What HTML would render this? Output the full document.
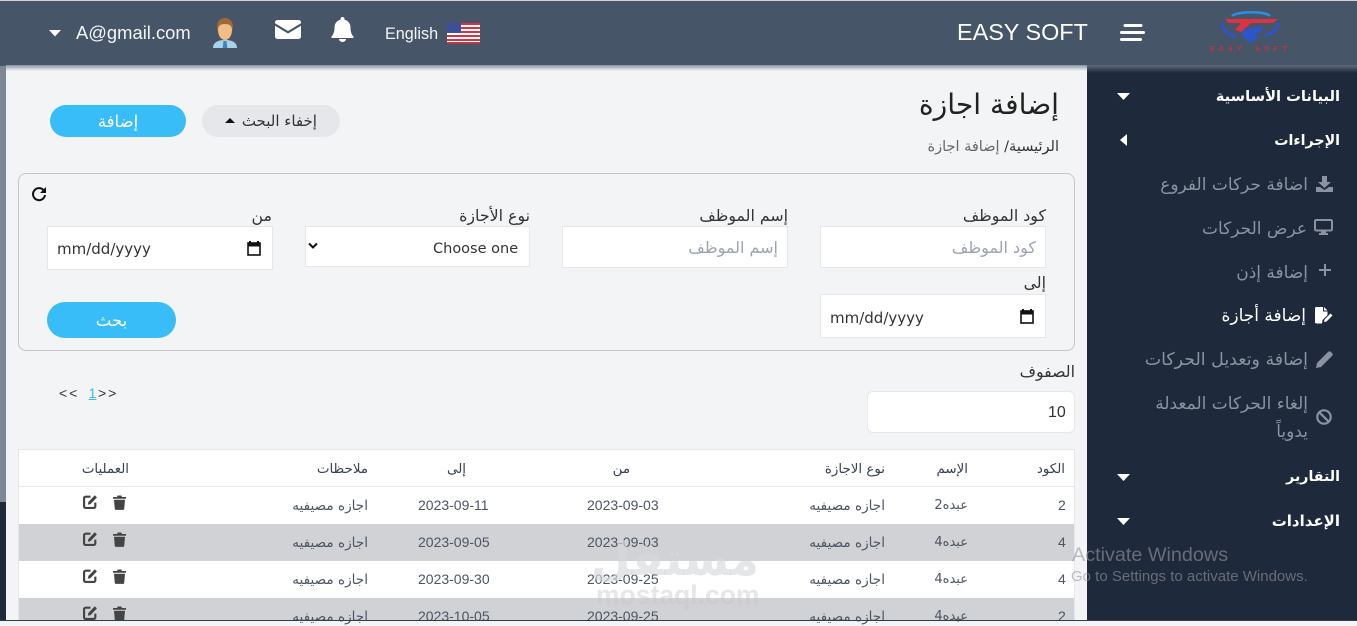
<!DOCTYPE html>
<html lang="ar">
<head>
<meta charset="utf-8">
<title>EASY SOFT</title>
<style>
*{box-sizing:border-box}
html,body{margin:0;padding:0;width:1357px;height:621px;overflow:hidden;background:#f3f4f6;font-family:"Liberation Sans","DejaVu Sans",sans-serif;color:#374151}
.a{position:absolute;white-space:nowrap}
.r{position:absolute;white-space:nowrap;direction:rtl;text-align:right;font-family:"DejaVu Sans",sans-serif}
.box{position:absolute;background:#fff;border:1px solid #e5e7eb}
.pill{position:absolute;border-radius:17px;text-align:center;direction:rtl;font-family:"DejaVu Sans",sans-serif}
.side{color:#fff;font-weight:bold;font-size:14.2px;line-height:22px}
.sub{color:#8b93a1;font-size:17px;line-height:22px}
.lbl{font-size:15.8px;line-height:20px;color:#333}
.ph{font-size:16px;line-height:20px;color:#9ca3af}
.date{font-family:"DejaVu Sans",sans-serif;font-size:15px;line-height:20px;color:#333}
.th{font-size:13.4px;line-height:18px;color:#374151}
.td{font-size:13.6px;line-height:18px;color:#4b5563}
.n{font-size:14px;line-height:18px;color:#4b5563}
.row{position:absolute;left:19px;width:1055px;height:37px;background:#fff}
.g{background:#d1d2d5}
svg{position:absolute;display:block}
</style>
</head>
<body>
<!-- page background pieces -->
<div class="a" style="left:0;top:66px;width:6px;height:436px;background:#7f8694"></div>
<div class="a" style="left:0;top:502px;width:6px;height:119px;background:#1e293b"></div>
<div class="a" style="left:1087px;top:66px;width:270px;height:555px;background:#1e293b"></div>

<!-- header -->
<div class="a" style="left:0;top:0;width:1357px;height:66px;background:#475569;border-top:1px solid #d4d4d4"></div>
<div class="a" style="left:6px;top:65px;width:1081px;height:6px;background:linear-gradient(#8a93a3,#f3f4f6)"></div>
<div class="a" style="left:1087px;top:65px;width:270px;height:8px;background:linear-gradient(#5f6b7d,#1e293b)"></div>

<svg style="left:49px;top:30px" width="12" height="7" viewBox="0 0 12 7"><path d="M0 0H12L6 6.500Z" fill="#fff"/></svg>
<div class="a" style="left:76px;top:22px;font-size:18.400px;line-height:22px;color:#f3f4f6">A@gmail.com</div>
<svg style="left:212px;top:18px" width="26" height="31" viewBox="0 0 26 31">
<path d="M1 30c0-5 4-8 12-8s12 3 12 8Z" fill="#a9d3ea"/>
<path d="M11.500 23h3l.8 7h-4.600Z" fill="#3f86b8"/>
<ellipse cx="13" cy="12" rx="7" ry="10" fill="#f2bd85"/>
<path d="M5.500 13C3.500 3 9 0 13 0s9.500 3 7.500 13C20 8 18 6 13 6S6 8 5.500 13Z" fill="#a06a36"/>
</svg>
<svg style="left:275px;top:20px" width="26" height="19" viewBox="0 0 26 19"><path d="M2.500 0h21A2.500 2.500 0 0 1 26 2.500v.7L13 11 0 3.200V2.500A2.500 2.500 0 0 1 2.500 0Z" fill="#fff"/><path d="M0 5.800l13 7.700 13-7.700V16.500a2.500 2.500 0 0 1-2.500 2.500h-21A2.500 2.500 0 0 1 0 16.500Z" fill="#fff"/></svg>
<svg style="left:331px;top:17px" width="23" height="25" viewBox="0 0 23 25"><path d="M11.500 0a2 2 0 0 1 2 2v.8c3.800.8 6 4 6 7.700 0 5 1.300 7 3 9 .4.500.1 1.500-.8 1.500H1.300c-.9 0-1.200-1-.8-1.500 1.700-2 3-4 3-9 0-3.700 2.200-6.900 6-7.700V2a2 2 0 0 1 2-2Z" fill="#fff"/><path d="M8 22h7a3.500 3 0 0 1-7 0Z" fill="#fff"/></svg>
<div class="a" style="left:385px;top:24px;font-size:16.200px;line-height:20px;color:#f3f4f6">English</div>
<svg style="left:447px;top:23px" width="33" height="21" viewBox="0 0 33 21">
<rect width="33" height="20" fill="#fff"/>
<g fill="#d8333f"><rect width="33" height="2"/><rect y="4" width="33" height="2"/><rect y="8" width="33" height="2"/><rect y="12" width="33" height="2"/><rect y="16" width="33" height="2"/><rect y="19" width="33" height="1.500"/></g>
<rect width="14" height="10" fill="#3b4f9a"/>
</svg>
<div class="a" style="left:957px;top:17px;font-size:23.400px;line-height:30px;color:#fff">EASY SOFT</div>
<svg style="left:1120px;top:23px" width="25" height="20" viewBox="0 0 25 20"><g stroke="#fff" stroke-width="3" stroke-linecap="round"><path d="M5 2.500h16M1.500 9.500h22M1.500 16.500h19"/></g></svg>
<svg style="left:1205px;top:8px" width="95" height="50" viewBox="0 0 95 50">
<path d="M27 8C33 3 60 3 65 8" stroke="#2a8fe0" stroke-width="2.400" fill="none"/>
<path d="M17 15C17 22 24 27 31 29M73 15C73 22 66 26 60 28" stroke="#2c55c9" stroke-width="3" fill="none"/>
<path d="M37 22L58 18 56 24 49 28 55 29 45 35 37 28Z" fill="#2c55c9"/>
<path d="M20 11H73L68 15H46L36 24 30 22 36 15H24Z" fill="#dc3242"/>
<text x="5" y="43" font-size="7.500" font-weight="bold" fill="#c9303f" textLength="77" font-family="Liberation Mono">EASY SOFT</text>
</svg>

<!-- page title -->
<div class="r" style="right:298px;top:85px;font-size:28.200px;line-height:40px;color:#222">إضافة اجازة</div>
<div class="r" style="right:298px;top:137px;font-size:14.500px;line-height:20px;color:#666"><span style="color:#333">الرئيسية/</span> إضافة اجازة</div>

<div class="pill" style="left:202px;top:105px;width:138px;height:32px;background:#e5e7eb;font-size:15px;line-height:33px;color:#333">إخفاء البحث <span style="display:inline-block;width:0;height:0;border:5px solid transparent;border-top:0;border-bottom:5px solid #111;vertical-align:3px;margin-right:2px"></span></div>
<div class="pill" style="left:50px;top:105px;width:136px;height:32px;background:#38bdf8;color:#fff;font-size:16.500px;line-height:33px">إضافة</div>

<!-- search panel -->
<div class="a" style="left:18px;top:173px;width:1057px;height:178px;border:1px solid #c4c6ca;border-radius:8px"></div>
<svg style="left:31px;top:186px" width="16" height="16" viewBox="0 0 16 16"><path d="M12.800 4.500A6 6 0 1 0 14 9" fill="none" stroke="#111" stroke-width="2"/><path d="M15 1v6H9Z" fill="#111"/></svg>

<div class="r lbl" style="right:311px;top:206px">كود الموظف</div>
<div class="box" style="left:820px;top:226px;width:226px;height:42px"></div>
<div class="r ph" style="right:321px;top:238px">كود الموظف</div>

<div class="r lbl" style="right:569px;top:206px">إسم الموظف</div>
<div class="box" style="left:562px;top:226px;width:226px;height:42px"></div>
<div class="r ph" style="right:579px;top:238px">إسم الموظف</div>

<div class="r lbl" style="right:827px;top:206px">نوع الأجازة</div>
<div class="box" style="left:305px;top:226px;width:225px;height:41px"></div>
<svg style="left:308px;top:242px" width="10" height="8" viewBox="0 0 10 8"><path d="M1 1.500l4 4 4-4" fill="none" stroke="#111" stroke-width="2"/></svg>
<div class="a" style="left:433px;top:239px;font-size:14.500px;line-height:20px;color:#333;font-family:'DejaVu Sans',sans-serif">Choose one</div>

<div class="r lbl" style="right:1085px;top:206px">من</div>
<div class="box" style="left:47px;top:226px;width:226px;height:44px"></div>
<div class="a date" style="left:57px;top:239px">mm/dd/yyyy</div>
<svg style="left:247px;top:241px" width="14" height="15" viewBox="0 0 14 15"><path d="M3 0v2M11 0v2" stroke="#111" stroke-width="2"/><rect x="1" y="2" width="12" height="12" fill="none" stroke="#111" stroke-width="1.600"/><rect x="1" y="2" width="12" height="3.500" fill="#111"/></svg>

<div class="r lbl" style="right:311px;top:273px">إلى</div>
<div class="box" style="left:820px;top:294px;width:226px;height:44px"></div>
<div class="a date" style="left:830px;top:308px">mm/dd/yyyy</div>
<svg style="left:1020px;top:309px" width="14" height="15" viewBox="0 0 14 15"><path d="M3 0v2M11 0v2" stroke="#111" stroke-width="2"/><rect x="1" y="2" width="12" height="12" fill="none" stroke="#111" stroke-width="1.600"/><rect x="1" y="2" width="12" height="3.500" fill="#111"/></svg>

<div class="pill" style="left:47px;top:302px;width:129px;height:36px;background:#38bdf8;border-radius:18px;color:#fff;font-size:16.500px;line-height:38px">بحث</div>

<!-- rows control -->
<div class="r lbl" style="right:282px;top:362px">الصفوف</div>
<div class="box" style="left:867px;top:391px;width:208px;height:42px;border-radius:6px"></div>
<div class="a" style="left:1048px;top:403px;font-size:16px;line-height:20px;color:#333">10</div>

<div class="a" style="left:59px;top:384px;font-size:14px;line-height:18px;color:#333;letter-spacing:2px">&lt;&lt;</div>
<div class="a" style="left:88px;top:384px;width:9px;text-align:center;font-size:14px;line-height:18px;color:#38bdf8;text-decoration:underline">1</div>
<div class="a" style="left:98px;top:384px;font-size:14px;line-height:18px;color:#333;letter-spacing:2px">&gt;&gt;</div>

<!-- table -->
<div class="a" style="left:18px;top:449px;width:1057px;height:172px;border:1px solid #e5e7eb;border-bottom:0;background:#fff"></div>
<div class="a" style="left:19px;top:486px;width:1055px;height:1px;background:#e5e7eb"></div>
<div class="row g" style="top:524px"></div>
<div class="row g" style="top:598px;height:23px"></div>

<div class="r th" style="right:292px;top:461px">الكود</div>
<div class="r th" style="right:389px;top:461px">الإسم</div>
<div class="r th" style="right:472px;top:461px">نوع الاجازة</div>
<div class="r th" style="right:727px;top:461px">من</div>
<div class="r th" style="right:891px;top:461px">إلى</div>
<div class="r th" style="right:989px;top:461px">ملاحظات</div>
<div class="r th" style="right:1228px;top:461px">العمليات</div>

<!-- rows -->
<div class="a n" style="left:1058px;top:496px">2</div>
<div class="r td" style="right:389px;top:497px;font-size:13px">عبده2</div>
<div class="r td" style="right:472px;top:497px">اجازه مصيفيه</div>
<div class="a n" style="left:587px;top:496px">2023-09-03</div>
<div class="a n" style="left:418px;top:496px">2023-09-11</div>
<div class="r td" style="right:989px;top:497px">اجازه مصيفيه</div>

<div class="a n" style="left:1058px;top:533px">4</div>
<div class="r td" style="right:389px;top:534px;font-size:13px">عبده4</div>
<div class="r td" style="right:472px;top:534px">اجازه مصيفيه</div>
<div class="a n" style="left:587px;top:533px">2023-09-03</div>
<div class="a n" style="left:418px;top:533px">2023-09-05</div>
<div class="r td" style="right:989px;top:534px">اجازه مصيفيه</div>

<div class="a n" style="left:1058px;top:570px">4</div>
<div class="r td" style="right:389px;top:571px;font-size:13px">عبده4</div>
<div class="r td" style="right:472px;top:571px">اجازه مصيفيه</div>
<div class="a n" style="left:587px;top:570px">2023-09-25</div>
<div class="a n" style="left:418px;top:570px">2023-09-30</div>
<div class="r td" style="right:989px;top:571px">اجازه مصيفيه</div>

<div class="a n" style="left:1058px;top:607px">2</div>
<div class="r td" style="right:389px;top:608px;font-size:13px">عبده4</div>
<div class="r td" style="right:472px;top:608px">اجازه مصيفيه</div>
<div class="a n" style="left:587px;top:607px">2023-09-25</div>
<div class="a n" style="left:418px;top:607px">2023-10-05</div>
<div class="r td" style="right:989px;top:608px">اجازه مصيفيه</div>

<!-- action icons -->
<svg style="left:83px;top:494px" width="15" height="15" viewBox="0 0 14 14"><path d="M7 2.500H2.500A1.500 1.500 0 0 0 1 4v7.500A1.500 1.500 0 0 0 2.500 13H10a1.500 1.500 0 0 0 1.500-1.500V8" fill="none" stroke="#444" stroke-width="2"/><path d="M5 7.500L11 1.200l2 2-6 6.300-2.500.5Z" fill="#444"/></svg>
<svg style="left:113px;top:495px" width="13" height="15" viewBox="0 0 13 15"><path d="M0 2h4l.7-1.500h3.600L9 2h4v1.800H0ZM1 4.800h11l-.8 9.200a1 1 0 0 1-1 .9H2.800a1 1 0 0 1-1-.9Z" fill="#444"/></svg>
<svg style="left:83px;top:531px" width="15" height="15" viewBox="0 0 14 14"><path d="M7 2.500H2.500A1.500 1.500 0 0 0 1 4v7.500A1.500 1.500 0 0 0 2.500 13H10a1.500 1.500 0 0 0 1.500-1.500V8" fill="none" stroke="#444" stroke-width="2"/><path d="M5 7.500L11 1.200l2 2-6 6.300-2.500.5Z" fill="#444"/></svg>
<svg style="left:113px;top:532px" width="13" height="15" viewBox="0 0 13 15"><path d="M0 2h4l.7-1.500h3.600L9 2h4v1.800H0ZM1 4.800h11l-.8 9.200a1 1 0 0 1-1 .9H2.800a1 1 0 0 1-1-.9Z" fill="#444"/></svg>
<svg style="left:83px;top:568px" width="15" height="15" viewBox="0 0 14 14"><path d="M7 2.500H2.500A1.500 1.500 0 0 0 1 4v7.500A1.500 1.500 0 0 0 2.500 13H10a1.500 1.500 0 0 0 1.500-1.500V8" fill="none" stroke="#444" stroke-width="2"/><path d="M5 7.500L11 1.200l2 2-6 6.300-2.500.5Z" fill="#444"/></svg>
<svg style="left:113px;top:569px" width="13" height="15" viewBox="0 0 13 15"><path d="M0 2h4l.7-1.500h3.600L9 2h4v1.800H0ZM1 4.800h11l-.8 9.200a1 1 0 0 1-1 .9H2.800a1 1 0 0 1-1-.9Z" fill="#444"/></svg>
<svg style="left:83px;top:605px" width="15" height="15" viewBox="0 0 14 14"><path d="M7 2.500H2.500A1.500 1.500 0 0 0 1 4v7.500A1.500 1.500 0 0 0 2.500 13H10a1.500 1.500 0 0 0 1.500-1.500V8" fill="none" stroke="#444" stroke-width="2"/><path d="M5 7.500L11 1.200l2 2-6 6.300-2.500.5Z" fill="#444"/></svg>
<svg style="left:113px;top:606px" width="13" height="15" viewBox="0 0 13 15"><path d="M0 2h4l.7-1.500h3.600L9 2h4v1.800H0ZM1 4.800h11l-.8 9.200a1 1 0 0 1-1 .9H2.800a1 1 0 0 1-1-.9Z" fill="#444"/></svg>

<!-- watermark -->
<div class="a" style="left:597px;top:530px;font-size:46px;line-height:58px;font-weight:bold;color:rgba(215,216,220,.65);direction:rtl;font-family:'DejaVu Sans',sans-serif;width:162px;text-align:center">مستقل</div>
<div class="a" style="left:596px;top:581px;font-size:26.500px;line-height:28px;font-weight:bold;color:rgba(200,200,205,.45)">mostaql.com</div>

<!-- sidebar -->
<div class="r side" style="right:17px;top:86px;font-size:14.700px">البيانات الأساسية</div>
<svg style="left:1117px;top:93px" width="13" height="7" viewBox="0 0 13 7"><path d="M0 0H13L6.500 7Z" fill="#fff"/></svg>
<div class="r side" style="right:17px;top:130px">الإجراءات</div>
<svg style="left:1120px;top:134px" width="7" height="12" viewBox="0 0 7 12"><path d="M7 0V12L0 6Z" fill="#fff"/></svg>

<svg style="left:1316px;top:176px" width="17" height="16" viewBox="0 0 17 16"><path d="M6 0h5v6h4l-6.500 6L2 6h4Z" fill="#8b93a1"/><path d="M0 11h4l4.500 3 4.500-3h4v5H0Z" fill="#8b93a1"/></svg>
<div class="r sub" style="right:49px;top:174px">اضافة حركات الفروع</div>

<svg style="left:1314px;top:219px" width="19" height="16" viewBox="0 0 19 16"><rect x="1" y="1" width="17" height="10.500" rx="1.200" fill="none" stroke="#8b93a1" stroke-width="2"/><path d="M7 12.500h5V14h2v2H5v-2h2Z" fill="#8b93a1"/></svg>
<div class="r sub" style="right:50px;top:218px">عرض الحركات</div>

<svg style="left:1318px;top:263px" width="14" height="14" viewBox="0 0 14 14"><path d="M7 1v12M1 7h12" stroke="#8b93a1" stroke-width="2"/></svg>
<div class="r sub" style="right:49px;top:262px">إضافة إذن</div>

<svg style="left:1314px;top:307px" width="19" height="17" viewBox="0 0 19 17"><path d="M1 1.500A1.500 1.500 0 0 1 2.500 0H9v4.500h4.500V8L8.500 13l-.5 3.500H2.500A1.500 1.500 0 0 1 1 15Z" fill="#fff"/><path d="M10 0l3.500 3.500H10Z" fill="#fff"/><path d="M10 15l.5-2.500 6-6 2 2-6 6Z" fill="#fff"/></svg>
<div class="r" style="right:51px;top:305px;line-height:22px;color:#fff;font-size:17px">إضافة أجازة</div>

<svg style="left:1316px;top:351px" width="17" height="17" viewBox="0 0 17 17"><path d="M0 17l1-5L12 1a2 2 0 0 1 3 0l1 1a2 2 0 0 1 0 3L5 16Z" fill="#8b93a1"/></svg>
<div class="r sub" style="right:49px;top:349px;font-size:17.400px">إضافة وتعديل الحركات</div>

<svg style="left:1316px;top:409px" width="16" height="16" viewBox="0 0 16 16"><circle cx="8" cy="8" r="6.700" fill="none" stroke="#8b93a1" stroke-width="2.200"/><path d="M3.300 3.300l9.400 9.400" stroke="#8b93a1" stroke-width="2.200"/></svg>
<div class="r sub" style="right:49px;top:393px">إلغاء الحركات المعدلة</div>
<div class="r sub" style="right:49px;top:421px">يدوياً</div>

<div class="r side" style="right:17px;top:466px">التقارير</div>
<svg style="left:1117px;top:474px" width="13" height="7" viewBox="0 0 13 7"><path d="M0 0H13L6.500 7Z" fill="#fff"/></svg>
<div class="r side" style="right:17px;top:510px;font-size:15px">الإعدادات</div>
<svg style="left:1117px;top:518px" width="13" height="7" viewBox="0 0 13 7"><path d="M0 0H13L6.500 7Z" fill="#fff"/></svg>

<!-- activation watermark -->
<div class="a" style="left:1072px;top:543px;font-size:19.800px;line-height:24px;color:rgba(150,150,155,.62)">Activate Windows</div>
<div class="a" style="left:1071px;top:568px;font-size:15px;line-height:18px;color:rgba(150,150,155,.62)">Go to Settings to activate Windows.</div>
<div class="a" style="left:0;top:620px;width:1357px;height:1px;background:#333c4a"></div>
</body>
</html>
